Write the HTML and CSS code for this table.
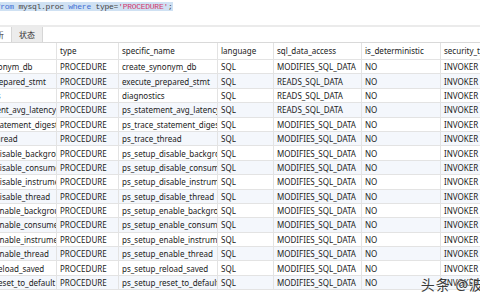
FILE: index.html
```html
<!DOCTYPE html>
<html lang="zh-CN">
<head>
    <meta charset="UTF-8">
    <title>Query result</title>
    <link rel="stylesheet" href="styles.css">
</head>
<body>
    <!-- SQL editor, scrolled a little to the right -->
    <div class="editor">
        <div class="code"><span class="sel"><span class="kw">select</span> * <span class="kw">from</span> mysql.proc <span class="kw">where</span> type=<span class="str">'PROCEDURE'</span>;</span></div>
    </div>
    <div class="tabs">
        <div class="tab first">剖析</div>
        <div class="tab active">状态</div>
    </div>
    <div class="grid">
        <table>
            <colgroup>
                <col class="c-name"><col class="c-type"><col class="c-spec"><col class="c-lang">
                <col class="c-access"><col class="c-det"><col class="c-sec">
            </colgroup>
            <thead>
                <tr><th>name</th><th>type</th><th>specific_name</th><th>language</th><th>sql_data_access</th><th>is_deterministic</th><th>security_type</th></tr>
            </thead>
            <tbody id="rows"></tbody>
        </table>
    </div>
    <div class="watermark">头条 @波</div>
    <script>
        // rows of mysql.proc
        var procs = [
            ['create_synonym_db', 'MODIFIES_SQL_DATA'],
            ['execute_prepared_stmt', 'READS_SQL_DATA'],
            ['diagnostics', 'READS_SQL_DATA'],
            ['ps_statement_avg_latency_histogram', 'READS_SQL_DATA'],
            ['ps_trace_statement_digest', 'MODIFIES_SQL_DATA'],
            ['ps_trace_thread', 'MODIFIES_SQL_DATA'],
            ['ps_setup_disable_background_threads', 'MODIFIES_SQL_DATA'],
            ['ps_setup_disable_consumer', 'MODIFIES_SQL_DATA'],
            ['ps_setup_disable_instrument', 'MODIFIES_SQL_DATA'],
            ['ps_setup_disable_thread', 'MODIFIES_SQL_DATA'],
            ['ps_setup_enable_background_threads', 'MODIFIES_SQL_DATA'],
            ['ps_setup_enable_consumer', 'MODIFIES_SQL_DATA'],
            ['ps_setup_enable_instrument', 'MODIFIES_SQL_DATA'],
            ['ps_setup_enable_thread', 'MODIFIES_SQL_DATA'],
            ['ps_setup_reload_saved', 'MODIFIES_SQL_DATA'],
            ['ps_setup_reset_to_default', 'MODIFIES_SQL_DATA']
        ];
        var tbody = document.getElementById('rows');
        procs.forEach(function(p, i) {
            var tr = document.createElement('tr');
            if (i % 2 == 1) tr.className = 'alt';
            var cells = [p[0], 'PROCEDURE', p[0], 'SQL', p[1], 'NO', 'INVOKER'];
            cells.forEach(function(c) {
                var td = document.createElement('td');
                td.textContent = c;
                tr.appendChild(td);
            });
            tbody.appendChild(tr);
        });
    </script>
</body>
</html>
```

FILE: styles.css
```css
:root {
    --grid-line: #e3e3e3;
    --text: #222;
    --row-alt: #f4f7fc;
}
body {
    margin: 0;
    width: 480px;
    height: 300px;
    overflow: hidden;
    position: relative;
    background: #fff;
    color: var(--text);
    font-family: "Noto Sans", "Noto Sans CJK SC", sans-serif;
    font-size: 8px;
}
/* Editor */
.editor {
    height: 25px;
    overflow: hidden;
}
.code {
    margin-left: -45px;
    padding-top: 1px;
    font-family: "Liberation Mono", monospace;
    font-size: 8px;
    letter-spacing: -0.27px;
    line-height: 11px;
    white-space: pre;
    color: #444;
}
.code .sel {
    background: #cfe1f3;
}
.code .kw {
    color: #3f6fd3;
}
.code .str {
    color: #d2386c;
}
/* Result tabs */
.tabs {
    display: flex;
    height: 15px;
    border-top: 2px solid #ebebeb;
    border-bottom: 1px solid #d9d9d9;
    overflow: hidden;
}
.tab {
    padding: 0 7px;
    line-height: 15px;
    font-size: 8px;
    color: #333;
    border-right: 1px solid #d6d6d6;
}
.tab.first {
    margin-left: -19px;
}
.tab.active {
    background: #ececec;
}
/* Data grid */
.grid {
    overflow: hidden;
}
table {
    margin-left: -46px;
    border-collapse: collapse;
    table-layout: fixed;
    width: 586px;
}
col.c-name { width: 102px; }
col.c-type { width: 62px; }
col.c-spec { width: 99px; }
col.c-lang { width: 56px; }
col.c-access { width: 88px; }
col.c-det { width: 79px; }
col.c-sec { width: 100px; }
th, td {
    padding: 0 2px 0 3px;
    text-align: left;
    font-weight: normal;
    white-space: nowrap;
    overflow: hidden;
    border: 1px solid var(--grid-line);
    border-top: none;
}
th {
    height: 16px;
    line-height: 16px;
}
td {
    height: 13.4px;
    line-height: 13px;
}
tr.alt td {
    background: var(--row-alt);
}
.watermark {
    position: absolute;
    right: -4px;
    top: 274px;
    font-size: 14px;
    color: #3a3a3a;
    text-shadow: 0 0 2px #fff;
    letter-spacing: 1px;
}
```
